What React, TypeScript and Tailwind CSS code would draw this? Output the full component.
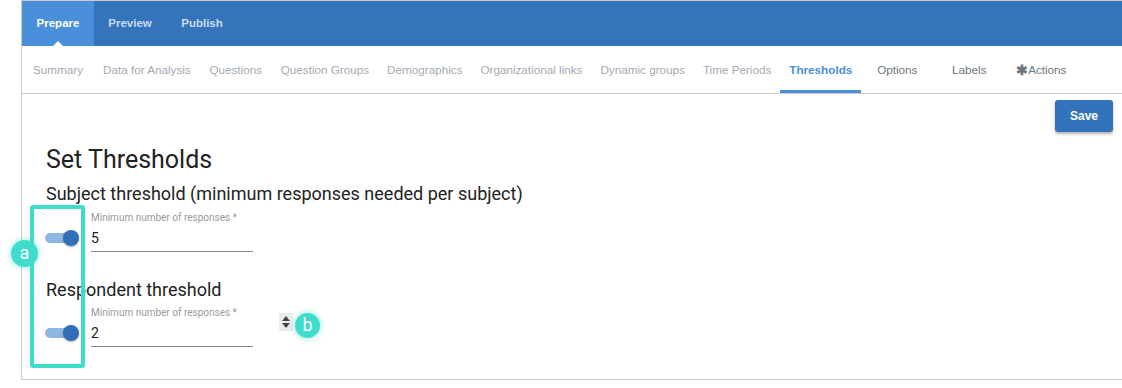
import { useState } from "react";

const topTabs = ["Prepare", "Preview", "Publish"];

const subTabs = [
  { label: "Summary", tone: "faded" },
  { label: "Data for Analysis", tone: "faded" },
  { label: "Questions", tone: "faded" },
  { label: "Question Groups", tone: "faded" },
  { label: "Demographics", tone: "faded" },
  { label: "Organizational links", tone: "faded" },
  { label: "Dynamic groups", tone: "faded" },
  { label: "Time Periods", tone: "faded" },
  { label: "Thresholds", tone: "active" },
  { label: "Options", tone: "normal" },
  { label: "Labels", tone: "normal" },
  { label: "Actions", tone: "normal", star: true },
];

function Toggle() {
  return (
    <div className="relative w-[34px] h-[16px]">
      <div className="absolute left-0 top-[3px] w-[30px] h-[10px] rounded-full bg-[#8fb6e3]" />
      <div className="absolute right-0 top-0 w-[16px] h-[16px] rounded-full bg-[#3170b8] shadow-[0_1px_2px_rgba(0,0,0,0.3)]" />
    </div>
  );
}

function NumberField({ value }: { value: string }) {
  return (
    <div className="w-[162px]">
      <div className="text-[10px] leading-[12px] text-[#9a9a9a]">Minimum number of responses *</div>
      <div className="h-[28px] pt-[1px] border-b border-[#8a8a8a] flex items-center text-[14px] text-[#222]">
        {value}
      </div>
    </div>
  );
}

function Badge({ letter, className }: { letter: string; className: string }) {
  return (
    <div
      className={
        "absolute rounded-full bg-[#3fdccc] text-white flex items-center justify-center text-[18px] leading-none shadow-[0_0_4px_2px_rgba(63,220,204,0.35)] " +
        className
      }
    >
      <span className="-mt-[2px]">{letter}</span>
    </div>
  );
}

export default function App() {
  const [active] = useState("Prepare");

  return (
    <div className="relative w-[1122px] h-[388px] bg-white overflow-hidden font-['Roboto',sans-serif]">
      <div className="ml-[21px] h-[380px] border-l border-t border-b border-[#cccccc] flex flex-col">
        {/* top bar */}
        <div className="h-[45px] bg-[#3574bb] flex font-['Liberation_Sans',Arial,sans-serif]">
          {topTabs.map((t) => (
            <div
              key={t}
              className={
                "relative min-w-[72px] px-[9px] flex items-center justify-center text-[11.5px] font-bold " +
                (t === active ? "bg-[#4a8fda] text-white" : "text-[#c9daf0]")
              }
            >
              {t}
              {t === active && (
                <div className="absolute bottom-0 left-1/2 -translate-x-1/2 w-0 h-0 border-l-[5px] border-r-[5px] border-b-[5px] border-l-transparent border-r-transparent border-b-white" />
              )}
            </div>
          ))}
        </div>

        {/* sub nav */}
        <div className="h-[48px] border-b border-[#cccccc] flex font-['Liberation_Sans',Arial,sans-serif]">
          {subTabs.map((t) => (
            <div
              key={t.label}
              className={
                "min-w-[72px] px-[9px] pt-[3px] flex items-center justify-center text-[11.7px] whitespace-nowrap border-b-[3px] " +
                (t.tone === "active"
                  ? "border-[#4a8fda] text-[#4a8fda] font-bold"
                  : t.tone === "normal"
                  ? "border-transparent text-[#6e7680]"
                  : "border-transparent text-[#a3aab3]")
              }
            >
              {t.star && <span className="text-[14px] font-bold text-[#6e7680] leading-none">✱</span>}
              {t.label}
            </div>
          ))}
        </div>

        {/* content */}
        <div className="flex-1 flex flex-col pl-[24px] pr-[9px]">
          <div className="flex justify-end pt-[6px]">
            <button className="w-[58px] h-[32px] rounded-[3px] bg-[#3373bb] text-white text-[12px] font-bold font-['Liberation_Sans',Arial,sans-serif] shadow-[0_2px_3px_rgba(0,0,0,0.3)]">
              Save
            </button>
          </div>

          <h1 className="mt-[13px] text-[25px] leading-[30px] text-[#222]">Set Thresholds</h1>
          <h2 className="mt-[8px] text-[18px] leading-[21px] text-[#222]">
            Subject threshold (minimum responses needed per subject)
          </h2>

          <div className="mt-[8px] flex">
            <div className="mt-[18px] -ml-[1px] mr-[12px]">
              <Toggle />
            </div>
            <NumberField value="5" />
          </div>

          <h2 className="mt-[27px] text-[18px] leading-[21px] text-[#222]">Respondent threshold</h2>

          <div className="mt-[7px] flex">
            <div className="mt-[18px] -ml-[1px] mr-[12px]">
              <Toggle />
            </div>
            <NumberField value="2" />
            <div className="ml-[26px] mt-[6px] w-[14px] h-[18px] bg-[#ececec] flex flex-col items-center justify-center gap-[2px]">
              <div className="w-0 h-0 border-l-[4px] border-r-[4px] border-b-[5px] border-l-transparent border-r-transparent border-b-[#444]" />
              <div className="w-0 h-0 border-l-[4px] border-r-[4px] border-t-[5px] border-l-transparent border-r-transparent border-t-[#444]" />
            </div>
          </div>
        </div>
      </div>

      {/* annotations */}
      <div className="absolute left-[30px] top-[205px] w-[55px] h-[163px] border-[4px] border-[#3fdccc] rounded-[3px]" />
      <Badge letter="a" className="left-[11px] top-[240px] w-[27px] h-[27px]" />
      <Badge letter="b" className="left-[295px] top-[313px] w-[25px] h-[25px]" />
    </div>
  );
}
